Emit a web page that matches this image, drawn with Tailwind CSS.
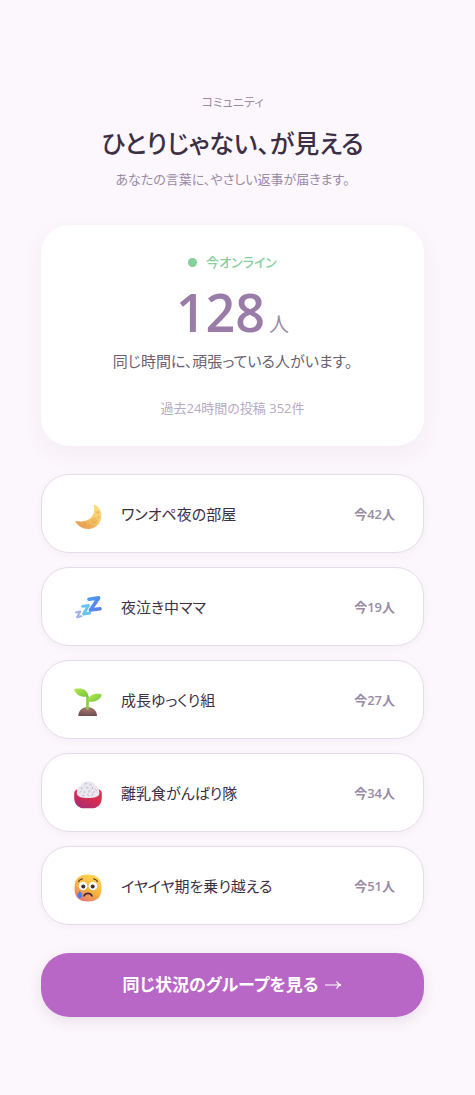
<!DOCTYPE html>
<html lang="ja">
<head>
<meta charset="utf-8">
<meta name="viewport" content="width=device-width, initial-scale=1">
<title>コミュニティ</title>
<script src="https://cdn.jsdelivr.net/npm/@tailwindcss/browser@4"></script>
</head>
<body class="min-h-screen bg-[#fcf7fc] font-['Open_Sans','Noto_Sans_CJK_JP',sans-serif] text-[#3b2f45] [font-feature-settings:'palt']">
<main class="pt-[93px] pb-[78px] pl-[41px] pr-[51px]">
  <header class="text-center">
    <p class="text-[12px] leading-5 text-[#9a8ba5]">コミュニティ</p>
    <h1 class="mt-[10px] text-[25px] leading-10 font-medium">ひとりじゃない、が見える</h1>
    <p class="mt-1 text-[13px] leading-6 text-[#9a8ba5]">あなたの言葉に、やさしい返事が届きます。</p>
  </header>

  <section class="mt-[34px] flex flex-col items-center rounded-[28px] bg-white pt-[27px] pb-7 text-center shadow-[0_8px_24px_rgba(90,60,100,0.05)]">
    <p class="flex items-center gap-[9px] text-[13px] leading-5 font-medium text-[#84d09a]"><span class="size-[9px] rounded-full bg-[#84d09a]"></span>今オンライン</p>
    <p class="mt-2 flex h-16 items-baseline gap-1 leading-[64px]"><span class="text-[52px] font-semibold text-[#9a7ca8]">128</span><span class="text-[20px] text-[#9a8ba5]">人</span></p>
    <p class="mt-[5px] text-[15px] leading-6 text-[#6b6070]">同じ時間に、頑張っている人がいます。</p>
    <p class="mt-[25px] text-[13px] leading-5 text-[#b8a9c4]">過去24時間の投稿 352件</p>
  </section>

  <nav class="mt-7 flex flex-col gap-[14px]" aria-label="グループ">
    <a href="#night" class="flex h-[79px] items-center rounded-[28px] border border-[#e4dcea] bg-white pl-8 pr-7 shadow-[0_2px_8px_rgba(90,60,100,0.04)]">
      <svg class="mt-1 size-7 shrink-0" viewBox="0 -1 28 28" aria-hidden="true">
        <defs><linearGradient id="moon" x1="1" y1="0" x2=".3" y2="1"><stop stop-color="#ffe58a"/><stop offset=".55" stop-color="#f6c868"/><stop offset="1" stop-color="#e89c50"/></linearGradient></defs>
        <path d="M20.500 1.500c4.300 2 6.900 6 6.900 11 0 7.700-6 13.500-13.200 13.500-5.700 0-10.100-2.800-12.600-6.900-.4-.7.1-1.200.9-1.100C14.500 20.300 22.300 13.500 19.700 2.200c-.1-.7.2-1 .8-.7Z" fill="url(#moon)"/>
        <g fill="#e8a74e" fill-opacity=".4" stroke="#dc9848" stroke-opacity=".7" stroke-width=".5"><circle cx="20.300" cy="17.600" r="2.400"/><circle cx="11" cy="21.500" r="1.300"/><circle cx="24" cy="9.300" r="1.200"/><circle cx="15.500" cy="23" r=".8"/><circle cx="24.500" cy="14" r=".7"/></g>
      </svg>
      <span class="ml-[19px] flex-1 text-[15px] leading-6">ワンオペ夜の部屋</span>
      <span class="text-[13px] leading-5 font-semibold text-[#9a8ba5]">今42人</span>
    </a>
    <a href="#crying" class="flex h-[79px] items-center rounded-[28px] border border-[#e4dcea] bg-white pl-8 pr-7 shadow-[0_2px_8px_rgba(90,60,100,0.04)]">
      <svg class="mt-1 size-7 shrink-0" viewBox="0 0 28 28" fill="none" stroke-linejoin="round" stroke-linecap="round" aria-hidden="true">
        <defs><linearGradient id="zzz" x1="0" y1="0" x2="1" y2="1"><stop stop-color="#4b9bf5"/><stop offset="1" stop-color="#5b7fe8"/></linearGradient></defs>
        <path d="M2 17.500 6.300 16.400 3 22.200 7.400 21.200" stroke="#9fb0f0" stroke-width="2"/>
        <path d="M8.500 11.400 14.500 10.500 9.500 19 15.800 18" stroke="#66c4f3" stroke-width="2.800"/>
        <path d="M15 4.200 24.600 2.900 16.500 15 26 13.800" stroke="url(#zzz)" stroke-width="3.600"/>
      </svg>
      <span class="ml-[19px] flex-1 text-[15px] leading-6">夜泣き中ママ</span>
      <span class="text-[13px] leading-5 font-semibold text-[#9a8ba5]">今19人</span>
    </a>
    <a href="#growth" class="flex h-[79px] items-center rounded-[28px] border border-[#e4dcea] bg-white pl-8 pr-7 shadow-[0_2px_8px_rgba(90,60,100,0.04)]">
      <svg class="mt-1 size-7 shrink-0" viewBox="0 0 28 28" aria-hidden="true">
        <defs><linearGradient id="leaf" x1="0" y1="0" x2="1" y2="1"><stop stop-color="#b9e94c"/><stop offset="1" stop-color="#70c63f"/></linearGradient><radialGradient id="soil" cx=".5" cy=".2" r=".8"><stop stop-color="#a27772"/><stop offset="1" stop-color="#74504f"/></radialGradient></defs>
        <path d="M4.300 28C4.300 22.500 8.500 19 13.500 19s9.500 3.500 9.500 9Z" fill="url(#soil)"/>
        <path d="M13.500 20.500V9" stroke="#83cf42" stroke-width="2.600" stroke-linecap="round"/>
        <path d="M.8.900C7.500-.2 13.600 1.200 14.600 8.700 7.900 9.400 2 7.500.3 2 .1 1.400.3 1 .8.900Z" fill="url(#leaf)"/>
        <path d="M27.200 6.200C20.500 4.800 14.800 6.600 13.600 13.600c6.200.8 12.200-.8 14-6.300.2-.6 0-1-.4-1.100Z" fill="url(#leaf)"/>
      </svg>
      <span class="ml-[19px] flex-1 text-[15px] leading-6">成長ゆっくり組</span>
      <span class="text-[13px] leading-5 font-semibold text-[#9a8ba5]">今27人</span>
    </a>
    <a href="#food" class="flex h-[79px] items-center rounded-[28px] border border-[#e4dcea] bg-white pl-8 pr-7 shadow-[0_2px_8px_rgba(90,60,100,0.04)]">
      <svg class="mt-1 size-7 shrink-0" viewBox="0 0 28 28" aria-hidden="true">
        <defs><linearGradient id="bowl" x1="1" y1="0" x2=".3" y2="1"><stop stop-color="#f0304f"/><stop offset=".5" stop-color="#d82e50"/><stop offset="1" stop-color="#a92c70"/></linearGradient></defs>
        <path d="M.2 12C.2 8.500 6 6.500 14 6.500s13.800 2 13.800 5.500v4c0 5.600-2 8.500-5.400 10.200-.9.800-2.200 1.100-3.900 1.100h-9c-1.700 0-3-.3-3.900-1.100C2.200 24.500.2 21.600.2 16Z" fill="url(#bowl)"/>
        <path d="M2.800 12.500C2.800 8 4.300 6 6.600 4.800 8 1.800 11 .3 14.200.3c3.800 0 6.400 1.600 7.500 4.500 2.500 1.400 3.700 3.900 3.700 7.700 0 3-5 4.600-11.300 4.600S2.800 15.500 2.800 12.500Z" fill="#ebe7f0"/>
        <g stroke="#b7b0c1" stroke-width=".9" stroke-linecap="round"><path d="m11 3 1.400-.6M16 3.600l1.300.7M7.500 6.800l.5 1.400M12.500 6.600l1.500.2M18.500 6.500l-.4 1.400M21.500 8.500l1 1M5.800 11.300l1.100-.8M10 10.500l.7 1.200M15.300 9.600l-.5 1.500M19 11.500l1.200-.7M8.500 14.300l1.500.3M13.500 13.700l1.400.5M18 14.400l.7-1.200"/></g>
      </svg>
      <span class="ml-[19px] flex-1 text-[15px] leading-6">離乳食がんばり隊</span>
      <span class="text-[13px] leading-5 font-semibold text-[#9a8ba5]">今34人</span>
    </a>
    <a href="#toddler" class="flex h-[79px] items-center rounded-[28px] border border-[#e4dcea] bg-white pl-8 pr-7 shadow-[0_2px_8px_rgba(90,60,100,0.04)]">
      <svg class="mt-1 size-7 shrink-0" viewBox="0 0 28 28" aria-hidden="true">
        <defs><linearGradient id="face" x1=".8" y1="0" x2=".3" y2="1"><stop stop-color="#ffdc55"/><stop offset=".6" stop-color="#f5ae42"/><stop offset="1" stop-color="#e77775"/></linearGradient></defs>
        <path d="M14 .5C23.500.5 27.500 5 27.500 14S23.500 27.500 14 27.500.5 23 .5 14 4.500.5 14 .5Z" fill="url(#face)"/>
        <circle cx="9" cy="12" r="4.300" fill="#fff"/><circle cx="19" cy="12" r="4.300" fill="#fff"/>
        <circle cx="9.300" cy="12.400" r="2" fill="#402b37"/><circle cx="18.700" cy="12.400" r="2" fill="#402b37"/>
        <path d="M4.500 7.600C5.400 6 6.600 5.200 8.300 4.900M23.500 7.600C22.600 6 21.400 5.200 19.700 4.900" fill="none" stroke="#6b4132" stroke-width="1.200" stroke-linecap="round"/>
        <path d="M10 21.800c1.700-3.300 6.300-3.300 8 0" fill="none" stroke="#4d2838" stroke-width="1.700" stroke-linecap="round"/>
        <path d="M5.800 17c1.200 1.700 2.300 3 2.300 4.500 0 1.600-1 2.700-2.300 2.700s-2.400-1.100-2.400-2.700c0-1.500 1.200-2.800 2.400-4.500Z" fill="#4d7df3"/>
      </svg>
      <span class="ml-[19px] flex-1 text-[15px] leading-6">イヤイヤ期を乗り越える</span>
      <span class="text-[13px] leading-5 font-semibold text-[#9a8ba5]">今51人</span>
    </a>
  </nav>

  <button type="button" class="mt-7 flex h-16 w-full items-center justify-center gap-[6px] rounded-[28px] bg-[#b967c6] text-[17px] leading-6 font-bold text-white shadow-[0_4px_14px_rgba(90,60,100,0.12)]">同じ状況のグループを見る
    <svg class="h-3 w-[18px]" viewBox="0 0 18 12" fill="none" stroke="currentColor" stroke-width="1.200" role="img" aria-label="→"><path d="M1 6h15.500M12.500 2.500Q14 5.300 17 6 14 6.700 12.500 9.500"/></svg>
  </button>
</main>
</body>
</html>
